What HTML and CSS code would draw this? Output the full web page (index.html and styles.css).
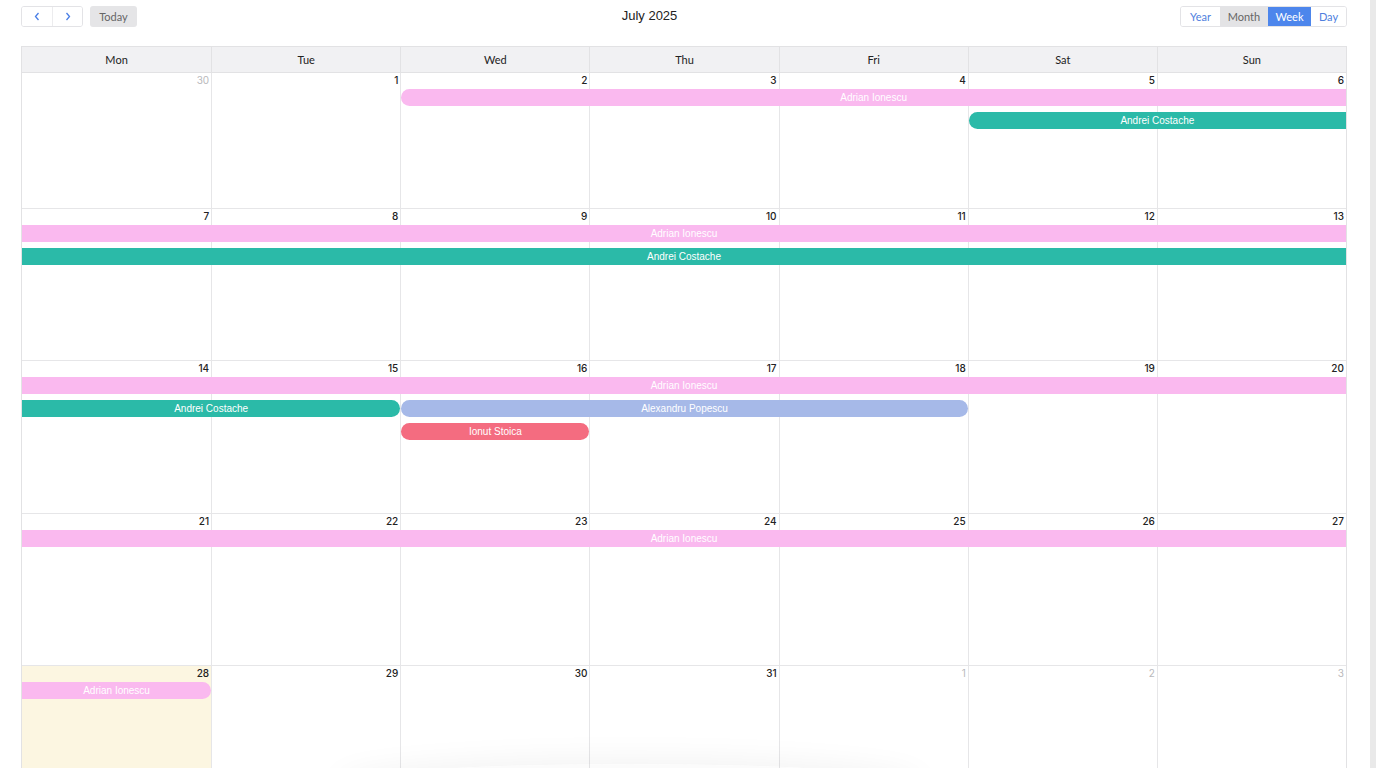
FILE: index.html
```html
<!DOCTYPE html>
<html>
<head>
<meta charset="utf-8">
<link rel="stylesheet" href="styles.css">
</head>
<body>
<div class="page">
  <div class="toolbar">
    <div class="left">
      <div class="btn-group">
        <button class="btn nav"><svg width="8" height="9" viewBox="0 0 8 9"><path d="M5.5 1 L2.5 4.5 L5.5 8" fill="none" stroke="#4a7fe6" stroke-width="1.3"/></svg></button>
        <button class="btn nav"><svg width="8" height="9" viewBox="0 0 8 9"><path d="M2.5 1 L5.5 4.5 L2.5 8" fill="none" stroke="#4a7fe6" stroke-width="1.3"/></svg></button>
      </div>
      <button class="btn today">Today</button>
    </div>
    <div class="title">July 2025</div>
    <div class="right">
      <div class="btn-group views">
        <button class="btn view">Year</button>
        <button class="btn view month">Month</button>
        <button class="btn view active">Week</button>
        <button class="btn view">Day</button>
      </div>
    </div>
  </div>

  <div class="calendar">
    <div class="head">
      <div>Mon</div><div>Tue</div><div>Wed</div><div>Thu</div><div>Fri</div><div>Sat</div><div>Sun</div>
    </div>

    <div class="week w1">
      <div class="cell c1"><span class="num muted">30</span></div>
      <div class="cell c2"><span class="num">1</span></div>
      <div class="cell c3"><span class="num">2</span></div>
      <div class="cell c4"><span class="num">3</span></div>
      <div class="cell c5"><span class="num">4</span></div>
      <div class="cell c6"><span class="num">5</span></div>
      <div class="cell c7"><span class="num">6</span></div>
      <div class="ev pink r1 start" style="grid-column: 3 / 8;">Adrian Ionescu</div>
      <div class="ev teal r2 start" style="grid-column: 6 / 8;">Andrei Costache</div>
    </div>

    <div class="week w2">
      <div class="cell c1"><span class="num">7</span></div>
      <div class="cell c2"><span class="num">8</span></div>
      <div class="cell c3"><span class="num">9</span></div>
      <div class="cell c4"><span class="num">10</span></div>
      <div class="cell c5"><span class="num">11</span></div>
      <div class="cell c6"><span class="num">12</span></div>
      <div class="cell c7"><span class="num">13</span></div>
      <div class="ev pink r1" style="grid-column: 1 / 8;">Adrian Ionescu</div>
      <div class="ev teal r2" style="grid-column: 1 / 8;">Andrei Costache</div>
    </div>

    <div class="week w3">
      <div class="cell c1"><span class="num">14</span></div>
      <div class="cell c2"><span class="num">15</span></div>
      <div class="cell c3"><span class="num">16</span></div>
      <div class="cell c4"><span class="num">17</span></div>
      <div class="cell c5"><span class="num">18</span></div>
      <div class="cell c6"><span class="num">19</span></div>
      <div class="cell c7"><span class="num">20</span></div>
      <div class="ev pink r1" style="grid-column: 1 / 8;">Adrian Ionescu</div>
      <div class="ev teal r2 end" style="grid-column: 1 / 3;">Andrei Costache</div>
      <div class="ev lav r2 start end" style="grid-column: 3 / 6;">Alexandru Popescu</div>
      <div class="ev red r3 start end" style="grid-column: 3 / 4;">Ionut Stoica</div>
    </div>

    <div class="week w4">
      <div class="cell c1"><span class="num">21</span></div>
      <div class="cell c2"><span class="num">22</span></div>
      <div class="cell c3"><span class="num">23</span></div>
      <div class="cell c4"><span class="num">24</span></div>
      <div class="cell c5"><span class="num">25</span></div>
      <div class="cell c6"><span class="num">26</span></div>
      <div class="cell c7"><span class="num">27</span></div>
      <div class="ev pink r1" style="grid-column: 1 / 8;">Adrian Ionescu</div>
    </div>

    <div class="week w5">
      <div class="cell c1 today-cell"><span class="num">28</span></div>
      <div class="cell c2"><span class="num">29</span></div>
      <div class="cell c3"><span class="num">30</span></div>
      <div class="cell c4"><span class="num">31</span></div>
      <div class="cell c5"><span class="num muted">1</span></div>
      <div class="cell c6"><span class="num muted">2</span></div>
      <div class="cell c7"><span class="num muted">3</span></div>
      <div class="ev pink r1 end" style="grid-column: 1 / 2;">Adrian Ionescu</div>
    </div>
  </div>
</div>
<div class="scrollbar"></div>
<div class="bottom-shadow"></div>
</body>
</html>
```

FILE: styles.css
```css
* { box-sizing: border-box; }
html, body { margin: 0; height: 100%; overflow: hidden; }
body {
  display: flex;
  background: #fff;
  font-family: "Liberation Sans", Arial, sans-serif;
  color: #222;
}
.page {
  flex: 1;
  padding: 6px 23px 0 21px;
  min-width: 0;
}
.scrollbar {
  width: 6px;
  background: #e9e9e9;
  flex: none;
}
.toolbar {
  display: flex;
  align-items: center;
  height: 21px;
}
.left, .right { display: flex; align-items: center; gap: 7px; flex: none; }
.title {
  flex: 1;
  text-align: center;
  font-size: 13px;
  color: #222;
  padding-right: 18px;
  margin-top: -2px;
}
.btn-group {
  display: flex;
  border: 1px solid #e3e3e6;
  border-radius: 3px;
  overflow: hidden;
  height: 21px;
}
.btn {
  border: none;
  background: #fff;
  font-family: Lato, "Open Sans", sans-serif;
  font-size: 11px;
  padding: 0;
  height: 21px;
  display: flex;
  align-items: center;
  justify-content: center;
  cursor: pointer;
}
.nav { width: 30px; height: 19px; }
.nav + .nav { border-left: 1px solid #ececee; }
.today {
  width: 47px;
  background: #e5e5e7;
  color: #666;
  border-radius: 3px;
}
.views .btn { height: 19px; }
.view { color: #4f80de; }
.view:nth-child(1) { width: 39px; }
.view.month { width: 48px; background: #e3e3e5; color: #666; }
.view.active { width: 43px; background: #4d86ec; color: #fff; }
.view:nth-child(4) { width: 35px; }

.calendar {
  margin-top: 19px;
  border: 1px solid #e2e2e4;
  border-bottom: none;
}
.head {
  display: grid;
  grid-template-columns: repeat(7, 1fr);
  background: #f1f1f3;
  height: 26px;
  border-bottom: 1px solid #e2e2e4;
}
.head div {
  display: flex;
  align-items: center;
  justify-content: center;
  font-family: Lato, "Open Sans", sans-serif;
  font-size: 11px;
  color: #222;
  border-left: 1px solid #e2e2e4;
  padding-bottom: 1px;
}
.head div:first-child { border-left: none; }

.week {
  display: grid;
  grid-template-columns: repeat(7, 1fr);
  grid-template-rows: 16px 17px 6px 17px 6px 17px 1fr;
  border-bottom: 1px solid #e6e6e8;
}
.w1 { height: 136px; }
.w2 { height: 152px; }
.w3 { height: 153px; }
.w4 { height: 152px; }
.w5 { height: 140px; border-bottom: none; }

.cell {
  grid-row: 1 / -1;
  border-left: 1px solid #e6e6e8;
  text-align: right;
  padding: 1px 2px 0 0;
  font-size: 10px;
  line-height: 13px;
}
.cell.c1 { border-left: none; grid-column: 1; }
.c2 { grid-column: 2; }
.c3 { grid-column: 3; }
.c4 { grid-column: 4; }
.c5 { grid-column: 5; }
.c6 { grid-column: 6; }
.c7 { grid-column: 7; }
.today-cell { background: #fcf6e1; }
.num {
  font-family: Inter, "Liberation Sans", sans-serif;
  font-size: 10px;
  line-height: 13px;
  color: #222;
  font-weight: 500;
}
.num.muted { color: #b9b9bc; font-weight: 400; }

.ev {
  z-index: 1;
  color: #fff;
  font-size: 10px;
  display: flex;
  align-items: center;
  justify-content: center;
  white-space: nowrap;
  overflow: hidden;
}
.r1 { grid-row: 2; }
.r2 { grid-row: 4; }
.r3 { grid-row: 6; }
.start { border-top-left-radius: 9px; border-bottom-left-radius: 9px; margin-left: 1px; }
.end { border-top-right-radius: 9px; border-bottom-right-radius: 9px; }
.pink { background: #fab9ef; }
.teal { background: #2bbaa8; }
.lav { background: #a6b9e8; }
.red { background: #f46c80; }

.bottom-shadow {
  position: fixed;
  left: 340px;
  width: 580px;
  bottom: -36px;
  height: 40px;
  border-radius: 50%;
  box-shadow: 0 0 30px 6px rgba(0,0,0,0.05);
  background: rgba(0,0,0,0.015);
  pointer-events: none;
}
```
